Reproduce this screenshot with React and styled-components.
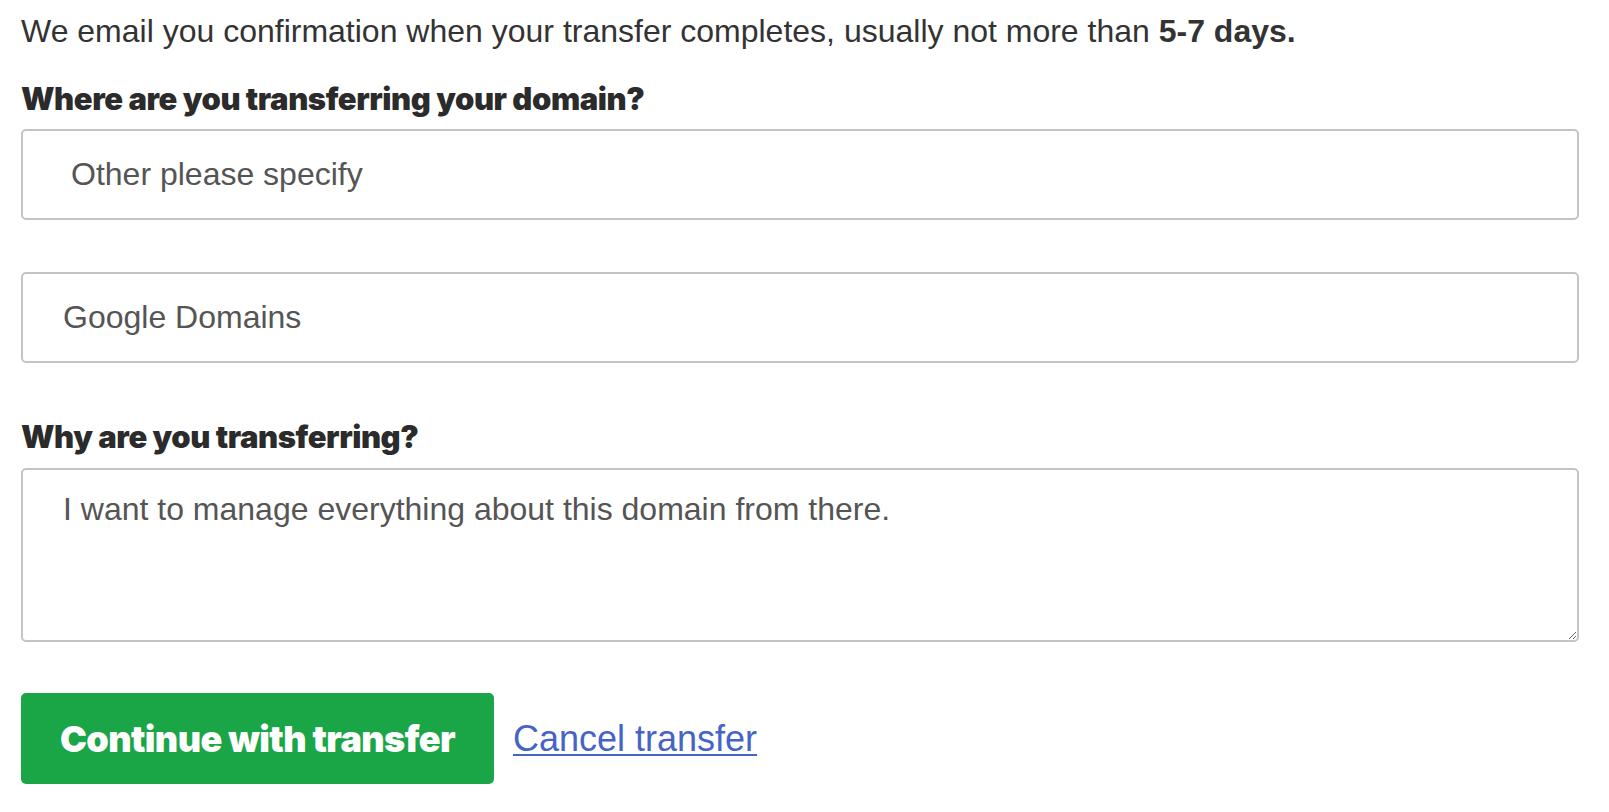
import React from 'react';
import styled, { createGlobalStyle } from 'styled-components';

const GlobalStyle = createGlobalStyle`
    html, body {
        margin: 0;
        padding: 0;
        background: #ffffff;
    }
    body {
        font-family: "Liberation Sans", Arial, sans-serif;
        color: #333333;
    }
`;

const Page = styled.main`
    width: 1609px;
    box-sizing: border-box;
    padding: 14px 30px 0 21px;
`;

const Intro = styled.p`
    margin: 0;
    font-size: 32px;
    line-height: 34px;
    color: #333333;

    b {
        font-weight: 700;
    }
`;

const Label = styled.h2`
    margin: ${(p) => p.top || '0'} 0 0 0;
    font-family: Inter, "Liberation Sans", sans-serif;
    font-weight: 900;
    font-size: 31px;
    line-height: 34px;
    letter-spacing: -0.42px;
    color: #2b2b2b;
`;

const Field = styled.input`
    display: block;
    box-sizing: border-box;
    width: 100%;
    height: 91px;
    margin: ${(p) => p.top || '0'} 0 0 0;
    padding: 0 0 0 ${(p) => p.indent || '40px'};
    border: 2px solid #c4c4c4;
    border-radius: 5px;
    background: #ffffff;
    font-family: "Liberation Sans", Arial, sans-serif;
    font-size: 32px;
    color: #555555;
    outline: none;
`;

const Reason = styled.textarea`
    display: block;
    box-sizing: border-box;
    width: 100%;
    height: 174px;
    margin: 14px 0 0 0;
    padding: 22px 40px 0 40px;
    border: 2px solid #c4c4c4;
    border-radius: 5px;
    background: #ffffff;
    font-family: "Liberation Sans", Arial, sans-serif;
    font-size: 32px;
    line-height: 34px;
    color: #555555;
    resize: vertical;
    outline: none;
`;

const Actions = styled.div`
    display: flex;
    align-items: center;
    gap: 19px;
    margin-top: 51px;
`;

const PrimaryButton = styled.button`
    height: 91px;
    width: 473px;
    padding: 0;
    border: none;
    border-radius: 5px;
    background: #1aa547;
    color: #ffffff;
    font-family: Inter, "Liberation Sans", sans-serif;
    font-weight: 900;
    font-size: 36px;
    letter-spacing: -0.6px;
    cursor: pointer;
`;

const CancelLink = styled.a`
    font-family: "Liberation Sans", Arial, sans-serif;
    font-size: 36px;
    color: #4664c8;
    text-decoration: underline;
    text-underline-offset: 3px;
    text-decoration-thickness: 2px;
    cursor: pointer;
`;

const App = () => {
    return (
        <React.Fragment>
            <GlobalStyle />
            <Page>
                <Intro>
                    We email you confirmation when your transfer completes, usually not more than <b>5-7 days.</b>
                </Intro>
                <Label top="34px">Where are you transferring your domain?</Label>
                <Field top="13px" indent="48px" readOnly value="Other please specify" />
                <Field top="52px" indent="40px" readOnly value="Google Domains" />
                <Label top="57px">Why are you transferring?</Label>
                <Reason readOnly defaultValue="I want to manage everything about this domain from there." />
                <Actions>
                    <PrimaryButton>Continue with transfer</PrimaryButton>
                    <CancelLink href="#">Cancel transfer</CancelLink>
                </Actions>
            </Page>
        </React.Fragment>
    );
};

export default App;
